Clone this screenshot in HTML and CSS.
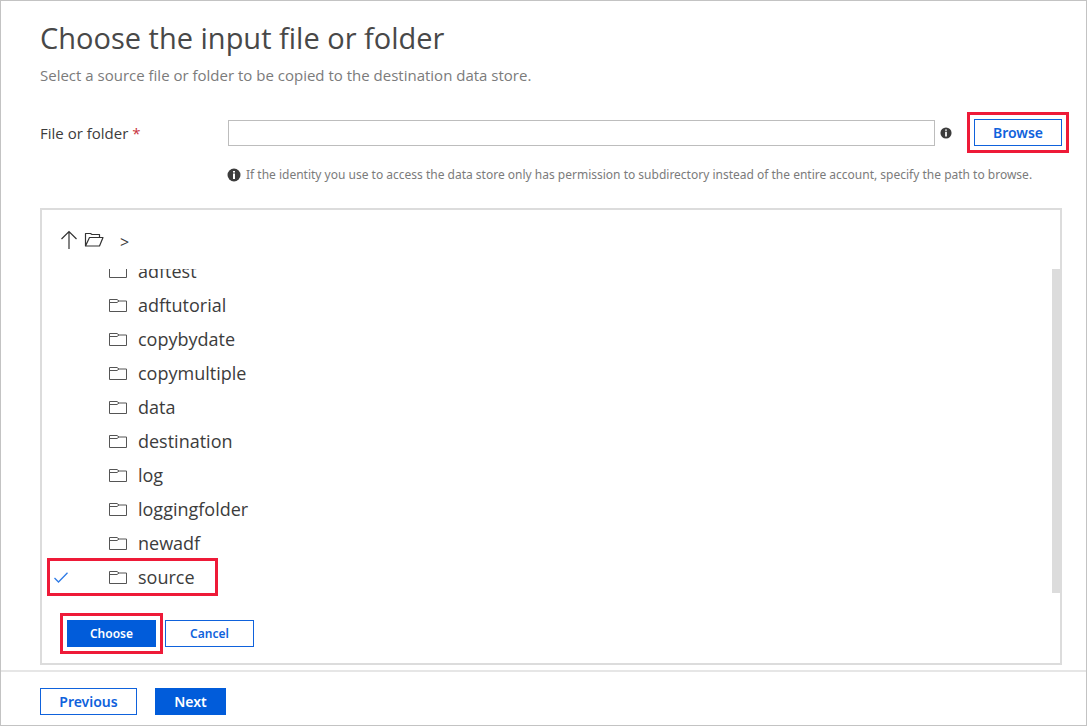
FILE: index.html
```html
<!DOCTYPE html>
<html lang="en">
<head>
<meta charset="utf-8">
<title>Choose the input file or folder</title>
<link rel="stylesheet" href="styles.css">
</head>
<body>
<svg class="defs" aria-hidden="true">
  <symbol id="folder" viewBox="0 0 18 14"><path d="M.5 13.500V1.500h7.500l2 1.500h7.500v10.500zM.5 4.500h7.500l2-1.500" fill="none" stroke="#555"/></symbol>
  <symbol id="info" viewBox="0 0 14 14"><circle cx="7" cy="7" r="6.500" fill="#3c3c3c"/><path d="M6 3h2v1.500H6zM6 5.500h2V11H6z" fill="#fff"/></symbol>
</svg>
<main class="content">
  <h1 class="title">Choose the input file or folder</h1>
  <p class="subtitle">Select a source file or folder to be copied to the destination data store.</p>
  <div class="field">
    <label class="field-label" for="path">File or folder <span class="required">*</span></label>
    <input class="field-input" id="path" type="text">
    <svg class="info-small"><use href="#info"/></svg>
    <button class="btn btn-browse marked" type="button">Browse</button>
  </div>
  <p class="hint"><svg class="info"><use href="#info"/></svg><span>If the identity you use to access the data store only has permission to subdirectory instead of the entire account, specify the path to browse.</span></p>
  <section class="panel">
    <nav class="crumbs">
      <button class="icon-btn" type="button" aria-label="Up"><svg width="18" height="20" viewBox="0 0 18 20"><path d="M9 19V1.500M1.500 9L9 1.500 16.500 9" fill="none" stroke="#333" stroke-width="1.200"/></svg></button>
      <button class="icon-btn" type="button" aria-label="Root folder"><svg width="20" height="15" viewBox="0 0 20 15"><path d="M1.500 14V1.500h5l1.500 1h7.500v3M1.500 14L5.500 5.500h13.500L15.500 14z" fill="none" stroke="#333" stroke-width="1.200" stroke-linejoin="round"/></svg></button>
      <span class="crumb-sep">&gt;</span>
    </nav>
    <div class="browser">
      <ul class="list">
        <li><button class="row" type="button"><svg class="folder"><use href="#folder"/></svg>adftest</button></li>
        <li><button class="row" type="button"><svg class="folder"><use href="#folder"/></svg>adftutorial</button></li>
        <li><button class="row" type="button"><svg class="folder"><use href="#folder"/></svg>copybydate</button></li>
        <li><button class="row" type="button"><svg class="folder"><use href="#folder"/></svg>copymultiple</button></li>
        <li><button class="row" type="button"><svg class="folder"><use href="#folder"/></svg>data</button></li>
        <li><button class="row" type="button"><svg class="folder"><use href="#folder"/></svg>destination</button></li>
        <li><button class="row" type="button"><svg class="folder"><use href="#folder"/></svg>log</button></li>
        <li><button class="row" type="button"><svg class="folder"><use href="#folder"/></svg>loggingfolder</button></li>
        <li><button class="row" type="button"><svg class="folder"><use href="#folder"/></svg>newadf</button></li>
        <li><button class="row row-selected" type="button" aria-pressed="true"><svg class="check" viewBox="0 0 14 11"><path d="M.5 6L4.500 10 13.500.8" fill="none" stroke="#2f7be6" stroke-width="1.300"/></svg><svg class="folder"><use href="#folder"/></svg>source</button></li>
      </ul>
      <div class="scrollbar"></div>
    </div>
    <div class="panel-actions">
      <button class="btn btn-small btn-primary marked" type="button">Choose</button>
      <button class="btn btn-small" type="button">Cancel</button>
    </div>
  </section>
</main>
<footer class="footer">
  <button class="btn btn-previous" type="button">Previous</button>
  <button class="btn btn-primary btn-next" type="button">Next</button>
</footer>
</body>
</html>
```
FILE: styles.css
```css
* { box-sizing: border-box; }
body {
  margin: 0;
  min-height: 100vh;
  display: flex;
  flex-direction: column;
  border: 1px solid #c3c3c3;
  background: #fff;
  color: #3c3c3c;
  font-family: "Open Sans", "Noto Sans", sans-serif;
  font-size: 15px;
}
.defs { position: absolute; width: 0; height: 0; }
svg { display: block; flex: none; }
.content { flex: 1; display: flex; flex-direction: column; padding: 17px 24px 5px 39px; }
.title { margin: 0; font-size: 29px; line-height: 40px; font-weight: 400; color: #484848; }
.subtitle { margin: 7px 0 0; font-size: 15px; line-height: 20px; color: #7b7b7b; }
.field { display: flex; align-items: center; margin-top: 34px; }
.field-label { width: 188px; line-height: 20px; }
.required { color: #c8303c; }
.field-input {
  flex: 1;
  min-width: 0;
  height: 26px;
  padding: 0 6px;
  border: 1px solid #bdbdbd;
  font: inherit;
}
.info { width: 14px; height: 14px; }
.info-small { width: 12px; height: 12px; margin: 0 22px 0 5px; }
.btn {
  height: 27px;
  padding: 0;
  border: 1px solid #0f62dc;
  background: #fff;
  color: #0f62dc;
  font: 600 14px/20px "Noto Sans", "Open Sans", sans-serif;
}
.btn-primary { background: #015cda; border-color: #015cda; color: #fff; }
.btn-browse { width: 88px; }
.btn-small { width: 89px; font-size: 12px; }
.marked { outline: 3px solid #ee1a38; outline-offset: 4px; }
.hint {
  display: flex;
  align-items: center;
  gap: 5px;
  margin: 19px 0 0 187px;
  font-family: "Noto Sans", "Open Sans", sans-serif;
  font-size: 12px;
  line-height: 20px;
  color: #7b7b7b;
}
.panel {
  flex: 1;
  display: flex;
  flex-direction: column;
  margin-top: 23px;
  border: 2px solid #dcdcdc;
}
.crumbs { display: flex; align-items: center; height: 59px; padding-left: 18px; gap: 6px; }
.icon-btn { padding: 0; border: 0; background: none; }
.crumb-sep { margin: 4px 0 0 10px; font-size: 16px; line-height: 20px; }
.browser { display: flex; height: 327px; overflow: hidden; }
.list { flex: 1; margin: -15px 0 0; padding: 0; list-style: none; }
.row {
  display: flex;
  align-items: center;
  width: 167px;
  height: 34px;
  margin-left: 7px;
  padding: 0 0 0 60px;
  border: 0;
  background: none;
  color: #3c3c3c;
  font: 18px/24px "Open Sans", "Noto Sans", sans-serif;
}
.row-selected { padding-left: 5px; outline: 3px solid #ee1a38; outline-offset: -1px; }
.check { width: 14px; height: 11px; margin-right: 41px; }
.folder { width: 18px; height: 14px; margin-right: 11px; }
.scrollbar { width: 8px; height: 324px; background: #dcdcdc; }
.panel-actions { display: flex; gap: 9px; padding: 24px 0 14px 25px; }
.footer { display: flex; gap: 18px; padding: 16px 39px 10px; border-top: 2px solid #e6e6e6; }
.btn-previous { width: 97px; }
.btn-next { width: 71px; }
```
